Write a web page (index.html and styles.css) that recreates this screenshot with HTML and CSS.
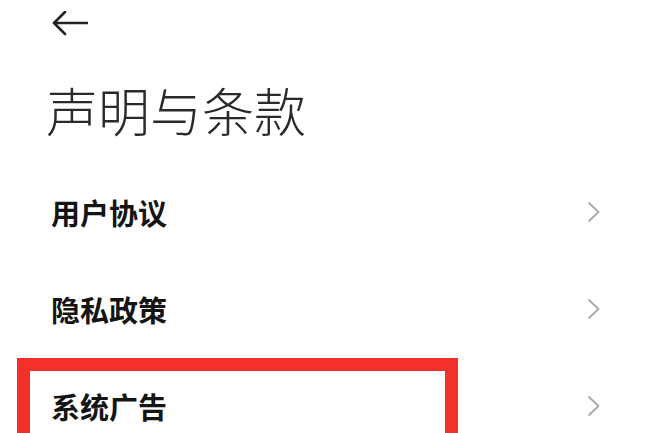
FILE: index.html
```html
<!DOCTYPE html>
<html lang="zh-CN">
<head>
<meta charset="utf-8">
<title>声明与条款</title>
<link rel="stylesheet" href="styles.css">
</head>
<body>
<div class="page">
  <div class="topbar">
    <svg class="back" width="36" height="26" viewBox="0 0 36 26">
      <path d="M2 12 H35 M13 1 L2 12 L13 23" fill="none" stroke="#222" stroke-width="2.6" stroke-linecap="round" stroke-linejoin="round"/>
    </svg>
  </div>
  <h1 class="title">声明与条款</h1>
  <ul class="list">
    <li class="row"><span class="label">用户协议</span><svg class="chev" width="14" height="22" viewBox="0 0 14 22"><path d="M2 2 L11.5 11 L2 20" fill="none" stroke="#a8a8a8" stroke-width="1.8" stroke-linecap="round" stroke-linejoin="round"/></svg></li>
    <li class="row"><span class="label">隐私政策</span><svg class="chev" width="14" height="22" viewBox="0 0 14 22"><path d="M2 2 L11.5 11 L2 20" fill="none" stroke="#a8a8a8" stroke-width="1.8" stroke-linecap="round" stroke-linejoin="round"/></svg></li>
    <li class="row highlighted"><span class="label">系统广告</span><svg class="chev" width="14" height="22" viewBox="0 0 14 22"><path d="M2 2 L11.5 11 L2 20" fill="none" stroke="#a8a8a8" stroke-width="1.8" stroke-linecap="round" stroke-linejoin="round"/></svg><span class="mark"></span></li>
  </ul>
</div>
</body>
</html>
```

FILE: styles.css
```css
html, body {
  margin: 0;
  padding: 0;
  background: #ffffff;
}
body {
  font-family: "Noto Sans CJK SC", "Noto Sans", sans-serif;
  color: #1c1c1c;
  overflow: hidden;
}
.page {
  width: 650px;
  height: 433px;
  overflow: hidden;
}
.topbar {
  height: 48px;
  padding-left: 52px;
  padding-top: 11px;
  box-sizing: border-box;
}
.back {
  display: block;
}
.title {
  margin: 31px 0 0 0;
  padding-left: 46px;
  font-size: 52px;
  line-height: 62px;
  font-weight: 300;
  color: #2a2a2a;
  letter-spacing: 0;
}
.list {
  list-style: none;
  margin: 22px 0 0 0;
  padding: 0;
}
.row {
  position: relative;
  height: 97px;
  display: flex;
  align-items: center;
  justify-content: space-between;
  padding: 0 49px 0 51px;
}
.label {
  font-size: 29px;
  font-weight: 700;
  color: #141414;
  line-height: 40px;
}
.chev {
  display: block;
}
.mark {
  position: absolute;
  left: 17px;
  top: 1px;
  width: 441px;
  height: 140px;
  box-sizing: border-box;
  border: 13px solid #f4302b;
  pointer-events: none;
}
```
